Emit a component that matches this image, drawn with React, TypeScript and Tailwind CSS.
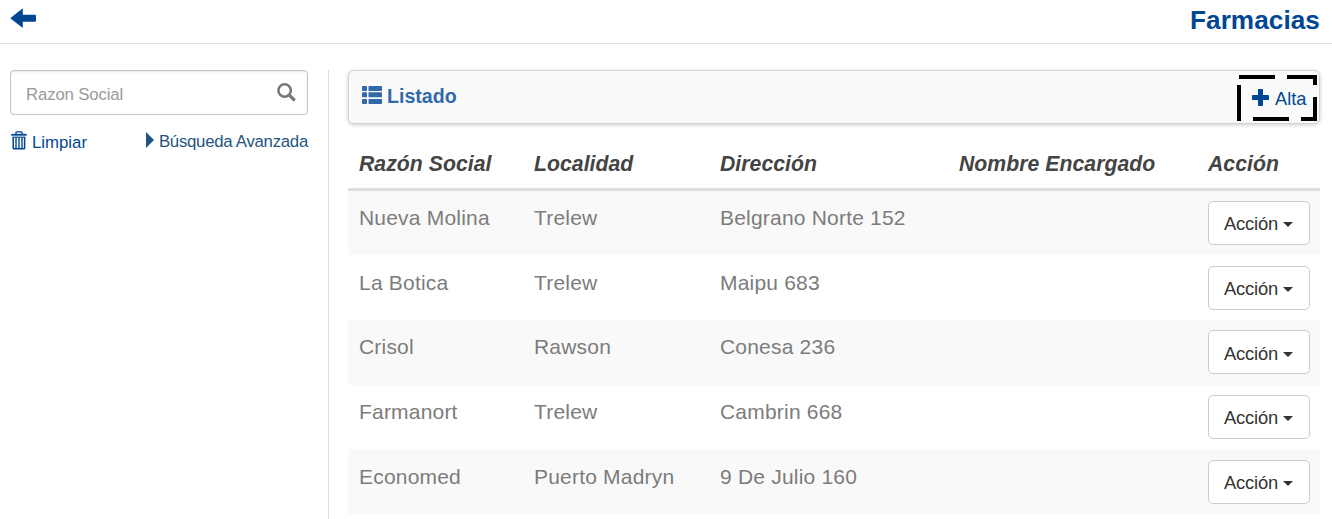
import React from "react";

type Farmacia = { nombre: string; localidad: string; direccion: string };

const farmacias: Farmacia[] = [
  { nombre: "Nueva Molina", localidad: "Trelew", direccion: "Belgrano Norte 152" },
  { nombre: "La Botica", localidad: "Trelew", direccion: "Maipu 683" },
  { nombre: "Crisol", localidad: "Rawson", direccion: "Conesa 236" },
  { nombre: "Farmanort", localidad: "Trelew", direccion: "Cambrin 668" },
  { nombre: "Economed", localidad: "Puerto Madryn", direccion: "9 De Julio 160" },
];

function BackIcon() {
  return (
    <svg className="block" width="26" height="20" viewBox="0 0 26 20" fill="#004793">
      <path d="M0.2 10.2 12.8 0.2 V6.8 H25 Q26 6.8 26 7.8 V12.7 Q26 13.7 25 13.7 H12.8 V20 Z" />
    </svg>
  );
}

function SearchIcon() {
  return (
    <svg className="block" width="19" height="19" viewBox="0 0 19 19" fill="none" stroke="#777">
      <circle cx="7.6" cy="7.5" r="6.2" strokeWidth="2.5" />
      <path d="M12.2 12.2 16.8 16.5" strokeWidth="3.2" strokeLinecap="round" />
    </svg>
  );
}

function TrashIcon() {
  return (
    <svg className="block" width="16" height="19" viewBox="0 0 16 19" fill="none" stroke="#004793">
      <path d="M5 3.2V1.6Q5 .8 5.8 .8H10.2Q11 .8 11 1.6V3.2" strokeWidth="1.3" />
      <path d="M.4 4.6V3.6Q.4 3.1 1 3.1H15Q15.6 3.1 15.6 3.6V4.6Z" fill="#004793" strokeWidth=".4" />
      <path d="M2.2 6V17.3Q2.2 17.8 2.7 17.8H13.1Q13.6 17.8 13.6 17.3V6" strokeWidth="1.5" />
      <path d="M1.5 6.2H14.3" strokeWidth="1.1" />
      <path d="M5 6.5V17M8 6.5V17M11 6.5V17" strokeWidth="1.4" />
    </svg>
  );
}

function ListIcon() {
  return (
    <svg className="block" width="20" height="18" viewBox="0 0 20 18" fill="#3169ab">
      <rect x="0" y="0" width="5" height="4.9" rx=".7" />
      <rect x="6.5" y="0" width="13.5" height="4.9" rx=".7" />
      <rect x="0" y="6.3" width="5" height="4.9" rx=".7" />
      <rect x="6.5" y="6.3" width="13.5" height="4.9" rx=".7" />
      <rect x="0" y="13" width="5" height="5" rx=".7" />
      <rect x="6.5" y="13" width="13.5" height="5" rx=".7" />
    </svg>
  );
}

function PlusIcon() {
  return (
    <svg className="block" width="17" height="17" viewBox="0 0 17 17" fill="#004793">
      <path d="M6.8 0H10.2Q11 0 11 .8V6H16.2Q17 6 17 6.8V10.2Q17 11 16.2 11H11V16.2Q11 17 10.2 17H6.8Q6 17 6 16.2V11H.8Q0 11 0 10.2V6.8Q0 6 .8 6H6V.8Q6 0 6.8 0Z" />
    </svg>
  );
}

function ActionButton() {
  return (
    <button className="flex h-[44px] w-[102px] items-center rounded-[5px] border border-[#ccc] bg-white pl-[15px] pt-[3px] text-[18.4px] leading-[26px] tracking-[-0.2px] text-[#333]">
      Acción
      <svg className="ml-[5px] mt-px" width="10" height="5" viewBox="0 0 10 5" fill="#333">
        <path d="M0 0H10L5 5Z" />
      </svg>
    </button>
  );
}

const columns = "grid grid-cols-[175px_186px_239px_249px_1fr] pl-[11px]";

export default function App() {
  return (
    <div className="h-[519px] overflow-hidden bg-white font-['Liberation_Sans',Arial,sans-serif]">
      <header className="flex h-[44px] items-start justify-between border-b border-[#e1e1e1] pl-[10px] pr-[12px]">
        <a className="pt-[8px]"><BackIcon /></a>
        <h1 className="pt-[4px] text-[26.2px] font-bold leading-[32px] tracking-[0.05px] text-[#004793]">Farmacias</h1>
      </header>
      <div className="flex pt-[26px]">
        <aside className="h-[449px] w-[329px] shrink-0 border-r border-[#ddd] pl-[10px] pr-[20px]">
          <div className="flex h-[45px] items-center justify-between rounded-[4px] border border-[#c4c4c4] pl-[15px] pr-[11px] shadow-[inset_0_1px_2px_rgba(0,0,0,0.09)]">
            <span className="pt-[4px] text-[16.8px] leading-[24px] tracking-[-0.15px] text-[#999]">Razon Social</span>
            <SearchIcon />
          </div>
          <div className="flex justify-between pt-[16px] text-[16.8px] leading-[24px]">
            <a className="flex text-[#004793]">
              <span className="ml-[1px] mr-[5px]"><TrashIcon /></span>
              <span>Limpiar</span>
            </a>
            <a className="-mt-px flex tracking-[-0.27px] text-[#235480]">
              <svg className="mr-[5px] mt-[2px]" width="8" height="16" viewBox="0 0 8 16" fill="#235480">
                <path d="M0 0 8 8 0 16Z" />
              </svg>
              <span>Búsqueda Avanzada</span>
            </a>
          </div>
        </aside>
        <main className="ml-[19px] w-[972px]">
          <div className="flex h-[54px] justify-between rounded-[6px] border border-[#d3d3d3] bg-[#fafafa] pl-[13px] pr-[2px] shadow-[0_1px_4px_rgba(0,0,0,0.2)]">
            <h2 className="flex pt-[12px] text-[19.6px] font-bold leading-[26px] text-[#3169ab]">
              <span className="mr-[5px] mt-[3px]"><ListIcon /></span>
              Listado
            </h2>
            <a className="relative mt-[4px] flex h-[46px] w-[80px] pl-[15px] pt-[11px] text-[18.2px] leading-[26px] text-[#004793]">
              <svg className="absolute inset-0" width="80" height="46" viewBox="0 0 80 46" fill="black">
                <path d="M2 0H38V4H2ZM50 0H80V10H76V4H50ZM76 22H80V46H64V42H76ZM16 42H52V46H16ZM0 10H4V46H0Z" />
              </svg>
              <span className="mr-[6px] mt-[3px]"><PlusIcon /></span>
              Alta
            </a>
          </div>
          <div className={columns + " h-[66.6px] border-b-[3px] border-[#ddd] pt-[25px] text-[21.2px] font-bold italic leading-[30px] tracking-[0.05px] text-[#444]"}>
            <div>Razón Social</div>
            <div>Localidad</div>
            <div>Dirección</div>
            <div>Nombre Encargado</div>
            <div>Acción</div>
          </div>
          <div>
            {farmacias.map((f) => (
              <div key={f.nombre} className={columns + " h-[64.7px] text-[21px] leading-[30px] tracking-[0.2px] text-[#7c7c7c] odd:bg-[#f9f9f9] even:bg-white"}>
                <div className="pt-[12.3px]">{f.nombre}</div>
                <div className="pt-[12.3px]">{f.localidad}</div>
                <div className="pt-[12.3px]">{f.direccion}</div>
                <div />
                <div className="pt-[10.3px]"><ActionButton /></div>
              </div>
            ))}
          </div>
        </main>
      </div>
    </div>
  );
}
